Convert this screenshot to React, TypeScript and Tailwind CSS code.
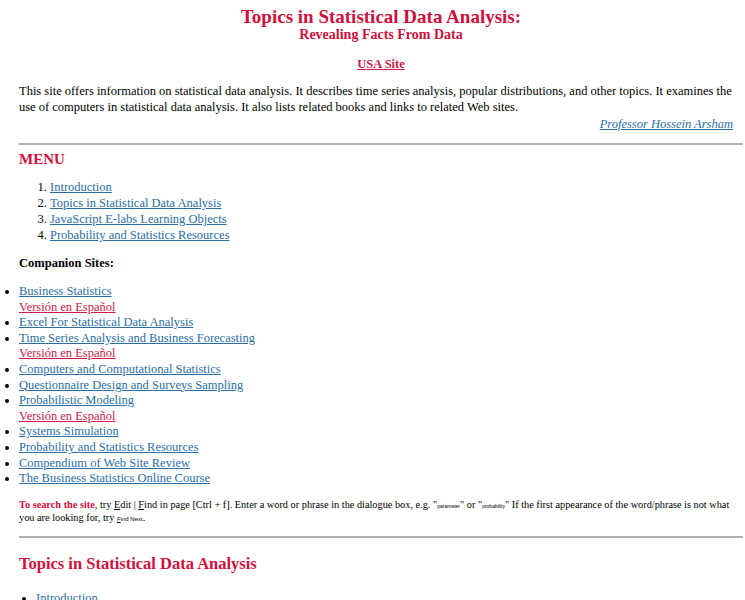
import React from 'react'

const red = 'text-[#d0103a]'
const linkBlue = 'text-[#2a6ea6] underline'
const linkRed = 'text-[#d0184a] underline'
const sans = "font-['Liberation_Sans',sans-serif]"

const menu = [
  'Introduction',
  'Topics in Statistical Data Analysis',
  'JavaScript E-labs Learning Objects',
  'Probability and Statistics Resources'
]

const companions: { title: string; spanish?: boolean }[] = [
  { title: 'Business Statistics', spanish: true },
  { title: 'Excel For Statistical Data Analysis' },
  { title: 'Time Series Analysis and Business Forecasting', spanish: true },
  { title: 'Computers and Computational Statistics' },
  { title: 'Questionnaire Design and Surveys Sampling' },
  { title: 'Probabilistic Modeling', spanish: true },
  { title: 'Systems Simulation' },
  { title: 'Probability and Statistics Resources' },
  { title: 'Compendium of Web Site Review' },
  { title: 'The Business Statistics Online Course' }
]

export default function App() {
  return (
    <div className="min-h-[600px] overflow-hidden bg-white pl-[19px] pr-[2px] font-['Liberation_Serif',serif] text-[12.5px] leading-[15.6px] text-black">
      <div className={`pt-[7px] text-center font-bold ${red}`}>
        <h1 className="text-[19px] leading-[20px]">Topics in Statistical Data Analysis:</h1>
        <h2 className="text-[14px] leading-[16px]">Revealing Facts From Data</h2>
      </div>
      <p className="mt-[13px] text-center leading-[16px]">
        <a className={`font-bold ${linkRed}`} href="#">USA Site</a>
      </p>

      <div className="pr-[10px]">
        <p className="mt-[11px] leading-[16px]">
          This site offers information on statistical data analysis. It describes time series analysis, popular distributions, and other topics. It examines the use of computers in statistical data analysis. It also lists related books and links to related Web sites.
        </p>
        <p className="mt-[1px] text-right leading-[16px]">
          <a className={`italic ${linkBlue}`} href="#">Professor Hossein Arsham</a>
        </p>
      </div>

      <hr className="mt-[11px] border-0 border-t-2 border-[#b0b0b0]" />

      <h3 className={`mt-[5px] text-[15px] font-bold leading-[18px] ${red}`}>MENU</h3>
      <ol className="mt-[11px] list-decimal pl-[31px] leading-[16px]">
        {menu.map((m) => (
          <li key={m}>
            <a className={linkBlue} href="#">{m}</a>
          </li>
        ))}
      </ol>

      <p className="mt-[12px] font-bold leading-[16px]">Companion Sites:</p>
      <ul className="mt-[13px] list-disc pl-0">
        {companions.map((c) => (
          <li key={c.title}>
            <a className={linkBlue} href="#">{c.title}</a>
            {c.spanish && (
              <>
                <br />
                <a className={linkRed} href="#">Versión en Español</a>
              </>
            )}
          </li>
        ))}
      </ul>

      <p className="mr-[-2px] mt-[12px] text-[10.3px] leading-[12px]">
        <span className={`font-bold ${red}`}>To search the site</span>, try <u>E</u>dit | <u>F</u>ind in page [Ctrl + f]. Enter a word or phrase in the dialogue box, e.g. "
        <span className={`${sans} text-[5px]`}>parameter</span>" or "
        <span className={`${sans} text-[5px]`}>probability</span>" If the first appearance of the word/phrase is not what you are looking for, try{' '}
        <span className={`${sans} text-[6px]`}><u>F</u>ind Next</span>.
      </p>

      <hr className="mt-[11px] border-0 border-t-2 border-[#b0b0b0]" />

      <h2 className={`mt-[16px] text-[16.5px] font-bold leading-[20px] ${red}`}>Topics in Statistical Data Analysis</h2>
      <ul className="mt-[17px] list-disc pl-[17px]">
        <li>
          <a className={linkBlue} href="#">Introduction</a>
        </li>
      </ul>
    </div>
  )
}
